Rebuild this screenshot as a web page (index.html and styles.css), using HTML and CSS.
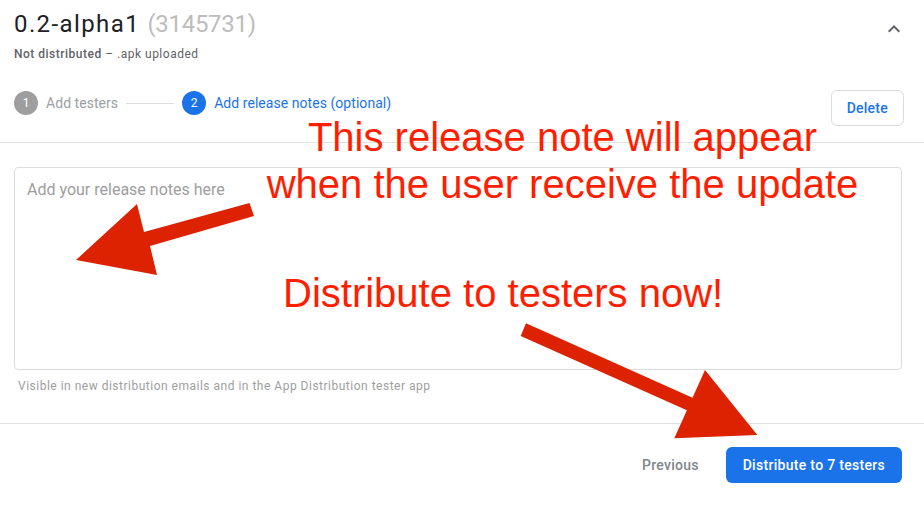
FILE: index.html
```html
<!DOCTYPE html>
<html lang="en">
<head>
<meta charset="utf-8">
<title>0.2-alpha1 release</title>
<link rel="stylesheet" href="styles.css">
</head>
<body>
<div class="page">
  <header class="header">
    <div class="title-row">
      <h1 class="title">0.2-alpha1 <span class="build">(3145731)</span></h1>
      <svg class="chevron" width="24" height="24" viewBox="0 0 24 24" aria-hidden="true"><path d="M7.41 15.41L12 10.83l4.59 4.58L18 14l-6-6-6 6z" fill="#5f6368"/></svg>
    </div>
    <div class="subtitle"><span class="status">Not distributed</span> – .apk uploaded</div>
    <div class="step-row">
      <div class="stepper">
        <span class="step-num done">1</span>
        <span class="step-label muted">Add testers</span>
        <span class="step-line"></span>
        <span class="step-num active">2</span>
        <span class="step-label current">Add release notes (optional)</span>
      </div>
      <button class="btn btn-outline">Delete</button>
    </div>
  </header>

  <section class="notes">
    <textarea class="notes-input" placeholder="Add your release notes here"></textarea>
    <div class="hint">Visible in new distribution emails and in the App Distribution tester app</div>
  </section>

  <footer class="footer">
    <button class="btn btn-text">Previous</button>
    <button class="btn btn-primary">Distribute to 7 testers</button>
  </footer>

  <div class="annot annot-top">This release note will appear<br>when the user receive the update</div>
  <div class="annot annot-bottom">Distribute to testers now!</div>
  <svg class="arrows" width="924" height="505" viewBox="0 0 924 505" aria-hidden="true">
    <polygon fill="#dc2200" points="249.5,203 254,216 150,246 157,275 76,260 137,204 144,232"/>
    <polygon fill="#dc2200" points="526,323.3 520.7,336 686.9,410.3 674.3,438.3 757.3,435 705,370 692.5,397.8"/>
  </svg>
</div>
</body>
</html>
```

FILE: styles.css
```css
* { box-sizing: border-box; }
html, body { margin: 0; padding: 0; background: #fff; }
body { font-family: Roboto, "Noto Sans", Arial, sans-serif; color: #202124; }
.page { position: relative; width: 924px; height: 505px; overflow: hidden; }

.header { padding: 8px 20px 16px 14px; border-bottom: 1px solid #e0e0e0; }
.title-row { display: flex; justify-content: space-between; align-items: flex-start; }
.title { margin: 0; font-size: 24px; line-height: 32px; font-weight: 400; letter-spacing: 1.4px; color: #202124; }
.build { color: #bdbdbd; letter-spacing: -0.3px; }
.chevron { margin-top: 9px; margin-right: -2px; }
.subtitle { margin-top: 5px; font-size: 12px; line-height: 16px; letter-spacing: 0.5px; color: #5f6368; }
.status { font-weight: 500; }

.step-row { margin-top: 29px; display: flex; justify-content: space-between; align-items: flex-start; }
.stepper { display: flex; align-items: center; height: 24px; }
.step-num { width: 24px; height: 24px; border-radius: 50%; color: #fff; font-size: 12px; display: flex; align-items: center; justify-content: center; }
.step-num.done { background: #9e9e9e; }
.step-num.active { background: #1a73e8; }
.step-label { margin-left: 8px; font-size: 14px; line-height: 20px; letter-spacing: 0.05px; }
.step-label.muted { color: #9aa0a6; }
.step-label.current { color: #1a73e8; }
.step-line { width: 48px; height: 1px; background: #dadce0; margin: 0 8px; }

.btn { font-family: Roboto, Arial, sans-serif; font-size: 14px; font-weight: 500; letter-spacing: 0.25px; height: 36px; padding: 0 16px; border-radius: 6px; cursor: pointer; }
.btn-outline { background: #fff; color: #1a73e8; border: 1px solid #dadce0; padding: 0 15px; margin-top: -1px; }
.btn-text { background: none; border: none; color: #80868b; }
.btn-primary { background: #1a73e8; border: none; color: #fff; padding: 0 17px; letter-spacing: 0.3px; }

.notes { padding: 24px 22px 29px 14px; border-bottom: 1px solid #e0e0e0; }
.notes-input { display: block; width: 100%; height: 203px; resize: none; border: 1px solid #dadce0; border-radius: 4px; padding: 10px 12px; font-family: Roboto, Arial, sans-serif; font-size: 16px; line-height: 24px; color: #202124; outline: none; }
.notes-input::placeholder { color: #9e9e9e; }
.hint { margin-top: 8px; padding-left: 4px; font-size: 12px; line-height: 16px; letter-spacing: 0.5px; color: #9e9e9e; }

.footer { display: flex; justify-content: flex-end; gap: 11px; padding: 23px 22px 0 14px; }

.annot { position: absolute; font-family: "Liberation Sans", Arial, sans-serif; font-size: 40px; color: #ff1e00; white-space: nowrap; }
.annot-top { left: 262px; width: 601px; top: 114px; line-height: 47px; text-align: center; }
.annot-bottom { left: 283px; top: 269px; line-height: 48px; }
.arrows { position: absolute; left: 0; top: 0; pointer-events: none; }
```
